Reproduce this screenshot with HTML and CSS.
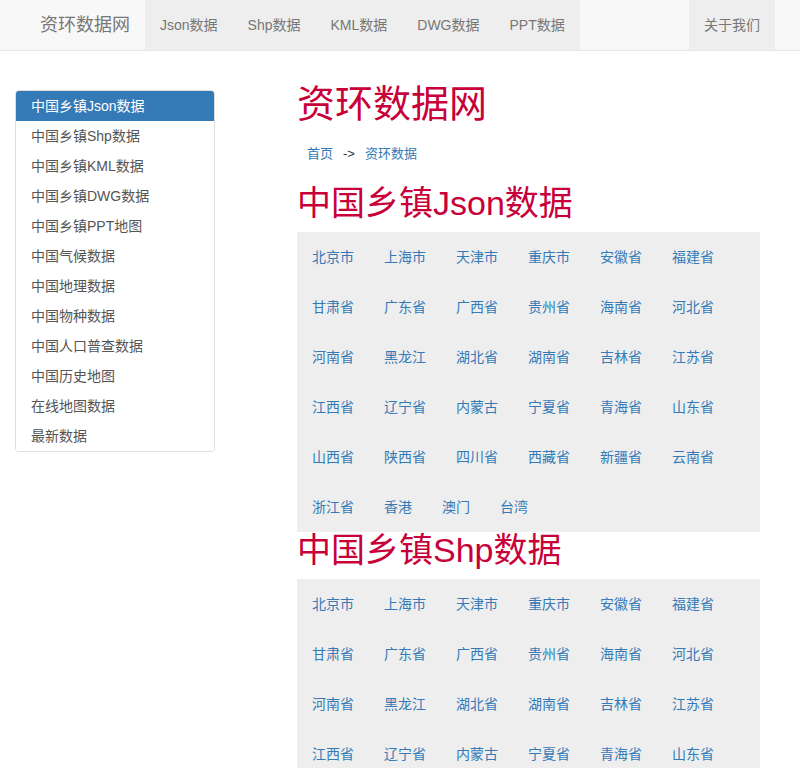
FILE: index.html
```html
<!DOCTYPE html>
<html lang="zh-CN">
<head>
<meta charset="utf-8">
<title>资环数据网</title>
<link rel="stylesheet" href="styles.css">
</head>
<body>
<nav class="navbar">
  <div class="navbar-inner">
    <a class="brand" href="#">资环数据网</a>
    <ul class="nav">
      <li><a href="#">Json数据</a></li>
      <li><a href="#">Shp数据</a></li>
      <li><a href="#">KML数据</a></li>
      <li><a href="#">DWG数据</a></li>
      <li><a href="#">PPT数据</a></li>
    </ul>
    <ul class="nav nav-right">
      <li><a href="#">关于我们</a></li>
    </ul>
  </div>
</nav>
<div class="page">
  <aside class="sidebar">
    <div class="list-group">
      <a class="list-item active" href="#">中国乡镇Json数据</a>
      <a class="list-item" href="#">中国乡镇Shp数据</a>
      <a class="list-item" href="#">中国乡镇KML数据</a>
      <a class="list-item" href="#">中国乡镇DWG数据</a>
      <a class="list-item" href="#">中国乡镇PPT地图</a>
      <a class="list-item" href="#">中国气候数据</a>
      <a class="list-item" href="#">中国地理数据</a>
      <a class="list-item" href="#">中国物种数据</a>
      <a class="list-item" href="#">中国人口普查数据</a>
      <a class="list-item" href="#">中国历史地图</a>
      <a class="list-item" href="#">在线地图数据</a>
      <a class="list-item" href="#">最新数据</a>
    </div>
  </aside>
  <main class="main">
    <h1 class="title">资环数据网</h1>
    <div class="breadcrumb"><a href="#">首页</a><span class="sep">-&gt;</span><a href="#">资环数据</a></div>
    <h2 class="section-title">中国乡镇Json数据</h2>
    <div class="regions">
      <a href="#">北京市</a><a href="#">上海市</a><a href="#">天津市</a><a href="#">重庆市</a><a href="#">安徽省</a><a href="#">福建省</a>
      <a href="#">甘肃省</a><a href="#">广东省</a><a href="#">广西省</a><a href="#">贵州省</a><a href="#">海南省</a><a href="#">河北省</a>
      <a href="#">河南省</a><a href="#">黑龙江</a><a href="#">湖北省</a><a href="#">湖南省</a><a href="#">吉林省</a><a href="#">江苏省</a>
      <a href="#">江西省</a><a href="#">辽宁省</a><a href="#">内蒙古</a><a href="#">宁夏省</a><a href="#">青海省</a><a href="#">山东省</a>
      <a href="#">山西省</a><a href="#">陕西省</a><a href="#">四川省</a><a href="#">西藏省</a><a href="#">新疆省</a><a href="#">云南省</a>
      <a href="#">浙江省</a><a href="#">香港</a><a href="#">澳门</a><a href="#">台湾</a>
    </div>
    <h2 class="section-title">中国乡镇Shp数据</h2>
    <div class="regions">
      <a href="#">北京市</a><a href="#">上海市</a><a href="#">天津市</a><a href="#">重庆市</a><a href="#">安徽省</a><a href="#">福建省</a>
      <a href="#">甘肃省</a><a href="#">广东省</a><a href="#">广西省</a><a href="#">贵州省</a><a href="#">海南省</a><a href="#">河北省</a>
      <a href="#">河南省</a><a href="#">黑龙江</a><a href="#">湖北省</a><a href="#">湖南省</a><a href="#">吉林省</a><a href="#">江苏省</a>
      <a href="#">江西省</a><a href="#">辽宁省</a><a href="#">内蒙古</a><a href="#">宁夏省</a><a href="#">青海省</a><a href="#">山东省</a>
      <a href="#">山西省</a><a href="#">陕西省</a><a href="#">四川省</a><a href="#">西藏省</a><a href="#">新疆省</a><a href="#">云南省</a>
      <a href="#">浙江省</a><a href="#">香港</a><a href="#">澳门</a><a href="#">台湾</a>
    </div>
  </main>
</div>
</body>
</html>
```
FILE: styles.css
```css
* { box-sizing: border-box; }
html, body { margin: 0; padding: 0; }
body {
  font-family: "Liberation Sans", "Noto Sans CJK SC", sans-serif;
  font-size: 14px;
  line-height: 20px;
  color: #333;
  background: #fff;
}
a { text-decoration: none; color: #337ab7; }

.navbar {
  height: 51px;
  background: #f8f8f8;
  border-bottom: 1px solid #e7e7e7;
}
.navbar-inner {
  width: 750px;
  margin: 0 auto;
  display: flex;
  height: 50px;
}
.brand {
  display: block;
  padding: 15px;
  font-size: 18px;
  line-height: 20px;
  color: #777;
}
.nav {
  list-style: none;
  margin: 0;
  padding: 0;
  display: flex;
  background: #eee;
}
.nav a {
  display: block;
  padding: 15px;
  line-height: 20px;
  color: #777;
}
.nav-right { margin-left: auto; }

.page {
  display: flex;
  align-items: flex-start;
}
.sidebar {
  width: 200px;
  margin: 39px 0 0 15px;
  flex: none;
}
.list-group {
  border: 1px solid #ddd;
  border-radius: 4px;
  overflow: hidden;
}
.list-item {
  display: block;
  padding: 5px 15px;
  line-height: 20px;
  color: #555;
  background: #fff;
}
.list-item.active {
  background: #337ab7;
  color: #fff;
}

.main {
  width: 463px;
  margin-left: 82px;
  padding-top: 33px;
}
.title {
  margin: 0;
  font-size: 38px;
  line-height: 40px;
  font-weight: 400;
  color: #c8003a;
}
.breadcrumb {
  margin: 12px 0 13px;
  padding: 8px 10px;
  font-size: 13px;
  line-height: 20px;
}
.breadcrumb .sep {
  color: #333;
  margin: 0 10px;
}
.section-title {
  margin: 0 0 11px;
  font-size: 34px;
  line-height: 36px;
  font-weight: 400;
  color: #c8003a;
}
.regions {
  background: #eee;
  display: flex;
  flex-wrap: wrap;
}
.regions a {
  display: block;
  padding: 15px;
  line-height: 20px;
}
```
